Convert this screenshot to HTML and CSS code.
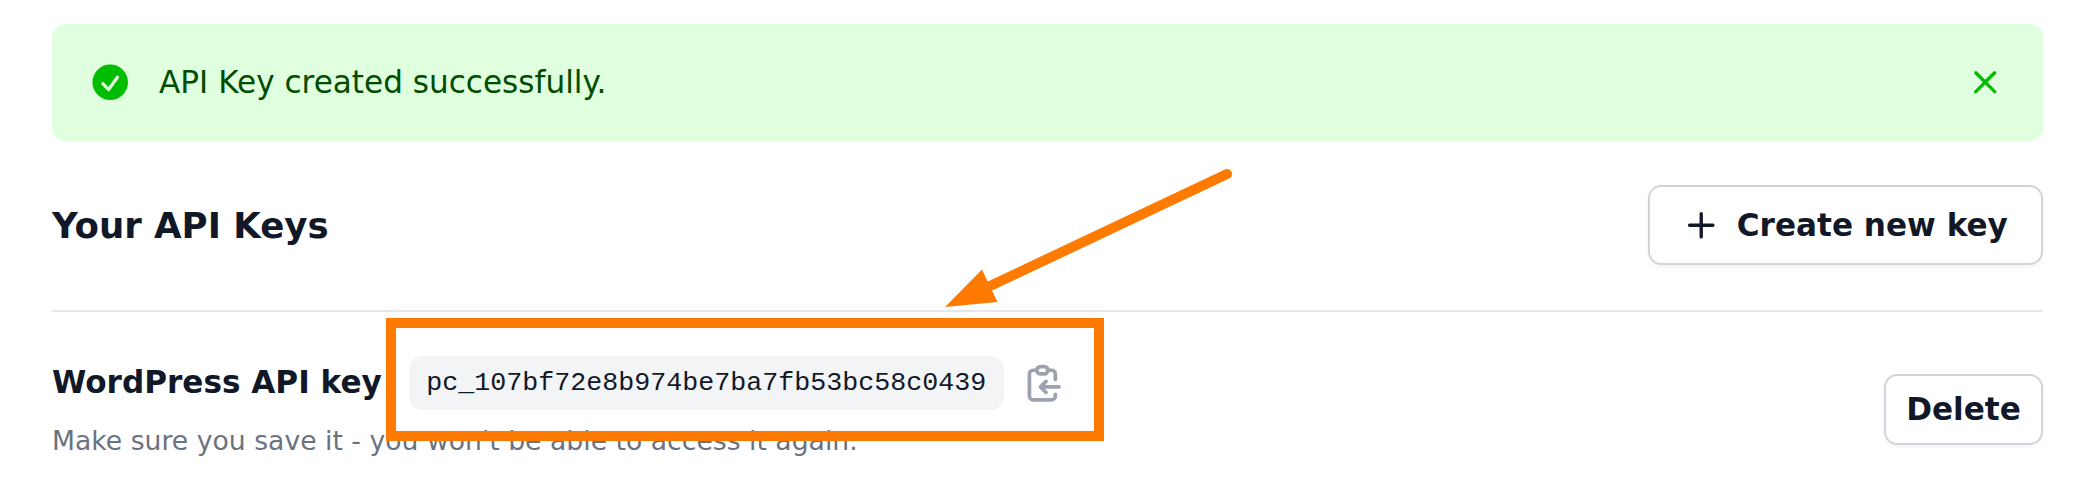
FILE: index.html
```html
<!DOCTYPE html>
<html lang="en">
<head>
<meta charset="utf-8">
<title>API Keys</title>
<link rel="stylesheet" href="styles.css">
</head>
<body>
<main class="page">
  <div class="alert">
    <svg class="icon" viewBox="0 0 20 20" fill="currentColor"><path fill-rule="evenodd" clip-rule="evenodd" d="M10 18a8 8 0 100-16 8 8 0 000 16zm3.857-9.809a.75.75 0 00-1.214-.882l-3.483 4.79-1.88-1.88a.75.75 0 10-1.06 1.061l2.5 2.5a.75.75 0 001.137-.089l4-5.5z"/></svg>
    <p class="alert-text">API Key created successfully.</p>
    <button class="dismiss" aria-label="Dismiss"><svg class="icon" viewBox="0 0 20 20" fill="currentColor"><path d="M6.28 5.22a.75.75 0 00-1.06 1.06L8.94 10l-3.72 3.72a.75.75 0 101.06 1.06L10 11.06l3.72 3.72a.75.75 0 101.06-1.06L11.06 10l3.72-3.72a.75.75 0 00-1.06-1.06L10 8.94 6.28 5.22z"/></svg></button>
  </div>
  <header class="section-head">
    <h1 class="title">Your API Keys</h1>
    <button class="btn btn-create"><svg class="icon" viewBox="0 0 20 20" fill="currentColor"><path d="M10.75 4.75a.75.75 0 00-1.5 0v4.5h-4.5a.75.75 0 000 1.5h4.5v4.5a.75.75 0 001.5 0v-4.5h4.5a.75.75 0 000-1.5h-4.5v-4.5z"/></svg><span>Create new key</span></button>
  </header>
  <section class="key-row">
    <div class="key-info">
      <div class="key-line">
        <h2 class="key-name">WordPress API key</h2>
        <code class="key-value">pc_107bf72e8b974be7ba7fb53bc58c0439</code>
        <svg class="icon copy" viewBox="0 0 24 24" fill="none" stroke="currentColor" stroke-width="2" stroke-linecap="round" stroke-linejoin="round"><path d="M8 5H6a2 2 0 00-2 2v12a2 2 0 002 2h10a2 2 0 002-2v-1M8 5a2 2 0 002 2h2a2 2 0 002-2M8 5a2 2 0 012-2h2a2 2 0 012 2m0 0h2a2 2 0 012 2v3m2 4H10m0 0l3-3m-3 3l3 3"/></svg>
      </div>
      <p class="key-note">Make sure you save it - you won't be able to access it again.</p>
    </div>
    <button class="btn btn-delete">Delete</button>
  </section>
</main>
<div class="highlight"></div>
<svg class="arrow" viewBox="0 0 300 150"><path d="M287 24L50 136" stroke="#ff7a00" stroke-width="10" stroke-linecap="round"/><path d="M5 157L42 119.500L57.500 152z" fill="#ff7a00"/></svg>
</body>
</html>
```
FILE: styles.css
```css
* { box-sizing: border-box; }
body {
  margin: 0;
  background: #fff;
  color: #111827;
  font-family: "DejaVu Sans", sans-serif;
  overflow: hidden;
}
h1, h2, p { margin: 0; }
button { font: inherit; color: inherit; background: none; border: 0; padding: 0; }
.page { padding: 24px 30px 0 52px; }
.icon { display: block; flex: none; width: 44.44px; height: 44.44px; }

.alert {
  display: flex;
  align-items: center;
  height: 117px;
  padding: 0 35.5px 0 36px;
  border-radius: 13.33px;
  background: #dfffdf;
  color: #00bd00;
}
.alert-text { flex: 1; margin-left: 26.6px; font-size: 31.11px; line-height: 44.44px; color: #004d00; }

.section-head {
  display: flex;
  align-items: center;
  justify-content: space-between;
  height: 171px;
  padding: 44px 0 45px;
  border-bottom: 2px solid #e5e7eb;
}
.title { padding-top: 2px; font-size: 35.55px; line-height: 53.33px; font-weight: 700; }
.btn {
  display: flex;
  align-items: center;
  justify-content: center;
  border: 2px solid #d1d5db;
  border-radius: 13.33px;
  background: #fff;
  font-size: 31.11px;
  font-weight: 700;
  line-height: 44.44px;
  white-space: nowrap;
  box-shadow: 0 2px 4px rgba(0, 0, 0, .05);
}
.btn-create { width: 395px; height: 80px; justify-content: flex-start; padding-left: 29px; gap: 13.33px; }
.btn-delete { width: 159px; height: 71px; }

.key-row { display: flex; align-items: center; justify-content: space-between; padding-top: 44px; height: 151px; }
.key-info { height: 107px; }
.key-line { display: flex; align-items: center; height: 54px; }
.key-name { width: 357px; padding-bottom: 2px; font-size: 31.11px; line-height: 44.44px; font-weight: 700; white-space: nowrap; }
.key-value {
  width: 595px;
  height: 54px;
  padding-left: 17.3px;
  border-radius: 13.33px;
  background: #f3f4f6;
  font: 26.67px/54px "Liberation Mono", monospace;
  white-space: nowrap;
}
.copy { margin-left: 17.5px; color: #9ca3af; }
.key-note { margin-top: 13px; font-size: 26.67px; line-height: 36px; color: #6b7280; white-space: nowrap; }

/* Annotation drawn over the page */
.highlight { position: absolute; left: 386px; top: 318px; width: 718px; height: 123px; border: 10px solid #ff7a00; }
.arrow { position: absolute; left: 940px; top: 150px; width: 300px; height: 150px; overflow: visible; }
```
